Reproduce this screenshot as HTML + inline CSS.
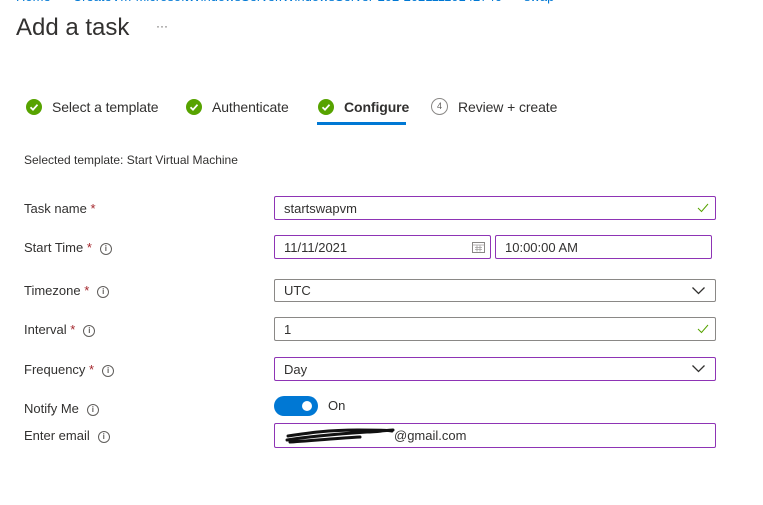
<!DOCTYPE html>
<html><head><style>
body{margin:0;width:763px;height:505px;background:#fff;font-family:"Liberation Sans",Arial,sans-serif;color:#323130;position:relative;overflow:hidden}
.a{position:absolute}
.lbl{font-size:13px;left:24px}
.req{color:#a4262c}
.inp{position:absolute;box-sizing:border-box;border:1px solid #8a8886;border-radius:2px;font-size:13px;padding-left:9px;display:flex;align-items:center}
.pur{border-color:#8e34b5}
.info{display:inline-block;width:10px;height:10px;border:1px solid #605e5c;border-radius:50%;font-size:8px;line-height:10px;text-align:center;color:#605e5c;vertical-align:1px;margin-left:8px;font-weight:bold}
.chk{position:absolute;width:16px;height:16px;border-radius:50%;background:#57a300}
.step{position:absolute;top:99px;font-size:14px;letter-spacing:-0.1px}
</style></head><body>
<div class="a" style="left:16px;top:-11px;font-size:13px;color:#0078d4;white-space:nowrap">Home &nbsp;&gt;&nbsp; CreateVm-MicrosoftWindowsServer.WindowsServer-202-20211110142746 &nbsp;&gt;&nbsp; swap &nbsp;&gt;</div>
<div class="a" style="left:16px;top:14px;font-size:24px;color:#323130">Add a task</div>
<div class="a" style="left:156px;top:19px;font-size:12px;color:#605e5c">···</div>

<div class="chk" style="left:26px;top:99px"><svg width="16" height="16"><path d="M4.5 8.2l2.5 2.5 4.5-5" stroke="#fff" stroke-width="1.8" fill="none"/></svg></div>
<div class="step" style="left:52px">Select a template</div>
<div class="chk" style="left:186px;top:99px"><svg width="16" height="16"><path d="M4.5 8.2l2.5 2.5 4.5-5" stroke="#fff" stroke-width="1.8" fill="none"/></svg></div>
<div class="step" style="left:212px">Authenticate</div>
<div class="chk" style="left:318px;top:99px"><svg width="16" height="16"><path d="M4.5 8.2l2.5 2.5 4.5-5" stroke="#fff" stroke-width="1.8" fill="none"/></svg></div>
<div class="step" style="left:344px;font-weight:bold;color:#323130">Configure</div>
<div class="a" style="left:317px;top:122px;width:89px;height:3px;background:#0078d4"></div>
<div class="a" style="left:431px;top:98px;width:15px;height:15px;border:1px solid #8a8886;border-radius:50%;font-size:9px;text-align:center;line-height:15px;color:#605e5c">4</div>
<div class="step" style="left:458px">Review + create</div>

<div class="a" style="left:24px;top:153px;font-size:12px">Selected template: Start Virtual Machine</div>

<div class="a lbl" style="top:201px">Task name <span class="req">*</span></div>
<div class="inp pur" style="left:274px;top:196px;width:442px;height:24px">startswapvm<svg class="a" style="right:6px;top:6px" width="12" height="10"><path d="M1 5l3.5 3.5L11 1" stroke="#57a300" fill="none"/></svg></div>

<div class="a lbl" style="top:240px">Start Time <span class="req">*</span><span class="info">i</span></div>
<div class="inp pur" style="left:274px;top:235px;width:217px;height:24px">11/11/2021<svg class="a" style="right:5px;top:5px" width="13" height="12"><rect x="0.5" y="1.5" width="12" height="10" fill="none" stroke="#8a8886"/><path d="M0.5 4h12M3 6.5h7M3 8.5h7M5 4.5v6M8 4.5v6" stroke="#a19f9d" stroke-width=".8"/></svg></div>
<div class="inp pur" style="left:495px;top:235px;width:217px;height:24px">10:00:00 AM</div>

<div class="a lbl" style="top:283px">Timezone <span class="req">*</span><span class="info">i</span></div>
<div class="inp" style="left:274px;top:279px;width:442px;height:23px">UTC<svg class="a" style="right:10px;top:7px" width="13" height="8"><path d="M.5 .5l6 6 6-6" stroke="#323130" fill="none" stroke-width="1.3"/></svg></div>

<div class="a lbl" style="top:322px">Interval <span class="req">*</span><span class="info">i</span></div>
<div class="inp" style="left:274px;top:317px;width:442px;height:24px">1<svg class="a" style="right:6px;top:6px" width="12" height="10"><path d="M1 5l3.5 3.5L11 1" stroke="#57a300" fill="none"/></svg></div>

<div class="a lbl" style="top:362px">Frequency <span class="req">*</span><span class="info">i</span></div>
<div class="inp pur" style="left:274px;top:357px;width:442px;height:24px">Day<svg class="a" style="right:10px;top:7px" width="13" height="8"><path d="M.5 .5l6 6 6-6" stroke="#323130" fill="none" stroke-width="1.3"/></svg></div>

<div class="a lbl" style="top:401px">Notify Me<span class="info">i</span></div>
<div class="a" style="left:274px;top:396px;width:44px;height:20px;border-radius:10px;background:#0078d4"><div class="a" style="left:28px;top:5px;width:10px;height:10px;border-radius:50%;background:#fff"></div></div>
<div class="a" style="left:328px;top:398px;font-size:13px">On</div>

<div class="a lbl" style="top:428px">Enter email<span class="info">i</span></div>
<div class="inp pur" style="left:274px;top:423px;width:442px;height:25px"><svg width="112" height="20" style="margin-right:-2px"><path d="M4 10c20-3 40-6 70-6 20 0 30 0 34 1M3 14c25-4 50-6 80-8 10 0 20-2 26-2M6 16c30-2 50-4 70-5" stroke="#111" stroke-width="3" fill="none" stroke-linecap="round"/></svg>@gmail.com</div>
</body></html>
